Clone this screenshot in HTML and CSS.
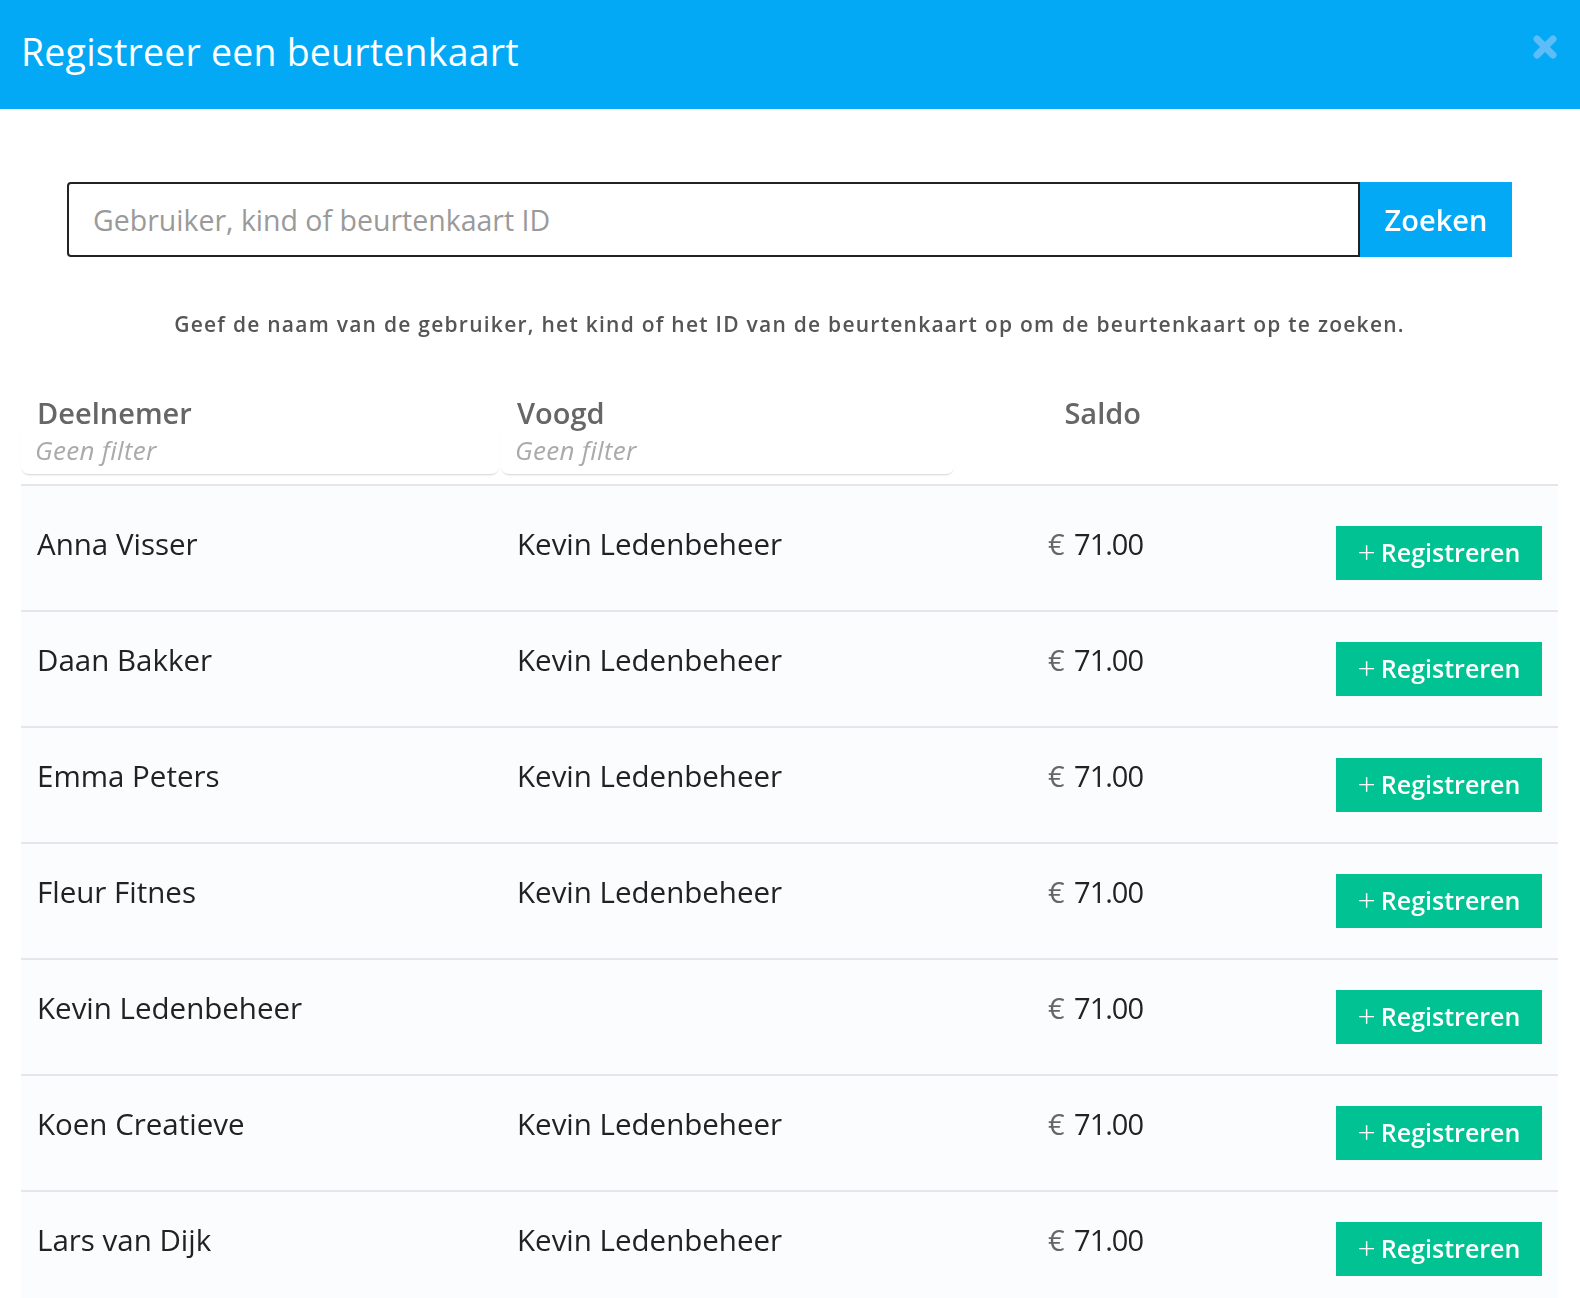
FILE: index.html
```html
<!DOCTYPE html>
<html>
<head>
    <meta charset="UTF-8">
    <title>Registreer een beurtenkaart</title>
    <link rel="stylesheet" href="styles.css">
</head>
<body>
    <div class="modal">
        <div class="modal-header">
            <h1>Registreer een beurtenkaart</h1>
            <button class="close-button" aria-label="Sluiten">
                <svg width="26" height="24" viewBox="0 0 26 24">
                    <path d="M5 4 L21 20 M21 4 L5 20" stroke="currentColor" stroke-width="7" stroke-linecap="round"/>
                </svg>
            </button>
        </div>

        <div class="modal-body">
            <form class="search-bar" onsubmit="return false">
                <input type="text" class="search-input" placeholder="Gebruiker, kind of beurtenkaart ID" autofocus>
                <button class="search-button">Zoeken</button>
            </form>

            <p class="help-text">Geef de naam van de gebruiker, het kind of het ID van de beurtenkaart op om de beurtenkaart op te zoeken.</p>

            <div class="card-table">
                <div class="table-head">
                    <div class="head-cell">
                        <span class="head-title">Deelnemer</span>
                        <input type="text" class="filter-input" placeholder="Geen filter">
                    </div>
                    <div class="head-cell">
                        <span class="head-title">Voogd</span>
                        <input type="text" class="filter-input" placeholder="Geen filter">
                    </div>
                    <div class="head-cell align-right">
                        <span class="head-title">Saldo</span>
                    </div>
                    <div class="head-cell"></div>
                </div>

                <div class="table-row">
                    <div class="cell">Anna Visser</div>
                    <div class="cell">Kevin Ledenbeheer</div>
                    <div class="cell amount"><span class="euro">€</span> 71.00</div>
                    <div class="cell action"><button class="register-button"><span class="plus">+</span>Registreren</button></div>
                </div>
                <div class="table-row">
                    <div class="cell">Daan Bakker</div>
                    <div class="cell">Kevin Ledenbeheer</div>
                    <div class="cell amount"><span class="euro">€</span> 71.00</div>
                    <div class="cell action"><button class="register-button"><span class="plus">+</span>Registreren</button></div>
                </div>
                <div class="table-row">
                    <div class="cell">Emma Peters</div>
                    <div class="cell">Kevin Ledenbeheer</div>
                    <div class="cell amount"><span class="euro">€</span> 71.00</div>
                    <div class="cell action"><button class="register-button"><span class="plus">+</span>Registreren</button></div>
                </div>
                <div class="table-row">
                    <div class="cell">Fleur Fitnes</div>
                    <div class="cell">Kevin Ledenbeheer</div>
                    <div class="cell amount"><span class="euro">€</span> 71.00</div>
                    <div class="cell action"><button class="register-button"><span class="plus">+</span>Registreren</button></div>
                </div>
                <div class="table-row">
                    <div class="cell">Kevin Ledenbeheer</div>
                    <div class="cell"></div>
                    <div class="cell amount"><span class="euro">€</span> 71.00</div>
                    <div class="cell action"><button class="register-button"><span class="plus">+</span>Registreren</button></div>
                </div>
                <div class="table-row">
                    <div class="cell">Koen Creatieve</div>
                    <div class="cell">Kevin Ledenbeheer</div>
                    <div class="cell amount"><span class="euro">€</span> 71.00</div>
                    <div class="cell action"><button class="register-button"><span class="plus">+</span>Registreren</button></div>
                </div>
                <div class="table-row">
                    <div class="cell">Lars van Dijk</div>
                    <div class="cell">Kevin Ledenbeheer</div>
                    <div class="cell amount"><span class="euro">€</span> 71.00</div>
                    <div class="cell action"><button class="register-button"><span class="plus">+</span>Registreren</button></div>
                </div>
            </div>
        </div>
    </div>
</body>
</html>
```

FILE: styles.css
```css
body {
    margin: 0;
    background-color: #fff;
    font-family: "Open Sans", "Noto Sans", sans-serif;
    color: #222;
    overflow: hidden;
}

.modal-header {
    height: 109px;
    background-color: #03a9f4;
    display: flex;
    align-items: center;
    justify-content: space-between;
    padding: 0 22px 0 21px;
    box-sizing: border-box;
}

.modal-header h1 {
    margin: 0 0 6px 0;
    font-size: 37.5px;
    font-weight: 400;
    color: #fff;
    letter-spacing: 0.2px;
}

.close-button {
    border: none;
    background: none;
    padding: 0;
    margin-bottom: 16px;
    color: #5cbdf8;
    cursor: pointer;
    display: flex;
}

.modal-body {
    padding: 73px 22px 0 21px;
}

.search-bar {
    display: flex;
    margin: 0 46px;
    height: 75px;
}

.search-input {
    flex: 1;
    border: 2px solid #222;
    border-radius: 4px 0 0 4px;
    padding: 0 24px;
    font-family: inherit;
    font-size: 28.5px;
    color: #222;
    outline: none;
}

.search-input::placeholder {
    color: #9a9a9a;
}

.search-button {
    width: 152px;
    border: none;
    background-color: #03a9f4;
    color: #fff;
    font-family: inherit;
    font-size: 29px;
    font-weight: 600;
    cursor: pointer;
}

.help-text {
    margin: 53px 0 0 0;
    text-align: center;
    font-size: 21px;
    font-weight: 600;
    letter-spacing: 1.25px;
    color: #555;
}

.card-table {
    margin-top: 58px;
}

.table-head,
.table-row {
    display: grid;
    grid-template-columns: 480px 455px 203px 1fr;
    border-bottom: 2px solid #e6e6ea;
}

.table-head {
    height: 88px;
    align-items: start;
}

.head-cell {
    display: flex;
    flex-direction: column;
    padding-right: 2px;
}

.head-title {
    padding: 0 16px;
    font-size: 29px;
    line-height: 34px;
    font-weight: 600;
    color: #666;
}

.filter-input {
    border: none;
    border-radius: 0 0 8px 8px;
    box-shadow: 0 2px 2px -1px #d4d4d8;
    padding: 2px 14px 6px;
    font-family: inherit;
    font-size: 26px;
    font-style: italic;
    letter-spacing: 0.3px;
    color: #444;
    outline: none;
    background: transparent;
}

.filter-input::placeholder {
    color: #aaa;
}

.table-row {
    background-color: #fbfcfe;
    align-items: start;
    padding-top: 30px;
    box-sizing: border-box;
    height: 116px;
}

.table-head + .table-row {
    padding-top: 40px;
    height: 126px;
}

.cell {
    padding: 0 16px;
    font-size: 29.5px;
    line-height: 36px;
    color: #222;
}

.align-right {
    align-items: flex-end;
}

.amount {
    text-align: right;
    font-size: 29px;
    letter-spacing: -1px;
}

.action {
    text-align: right;
}

.euro {
    color: #666;
    margin-right: 4px;
}

.register-button {
    height: 54px;
    width: 206px;
    border: none;
    background-color: #00c292;
    color: #fff;
    font-family: inherit;
    font-size: 25px;
    font-weight: 600;
    cursor: pointer;
    vertical-align: top;
    padding-bottom: 4px;
}

.plus {
    font-weight: 300;
    font-size: 32px;
    vertical-align: -2px;
    margin-right: 5px;
}
```
